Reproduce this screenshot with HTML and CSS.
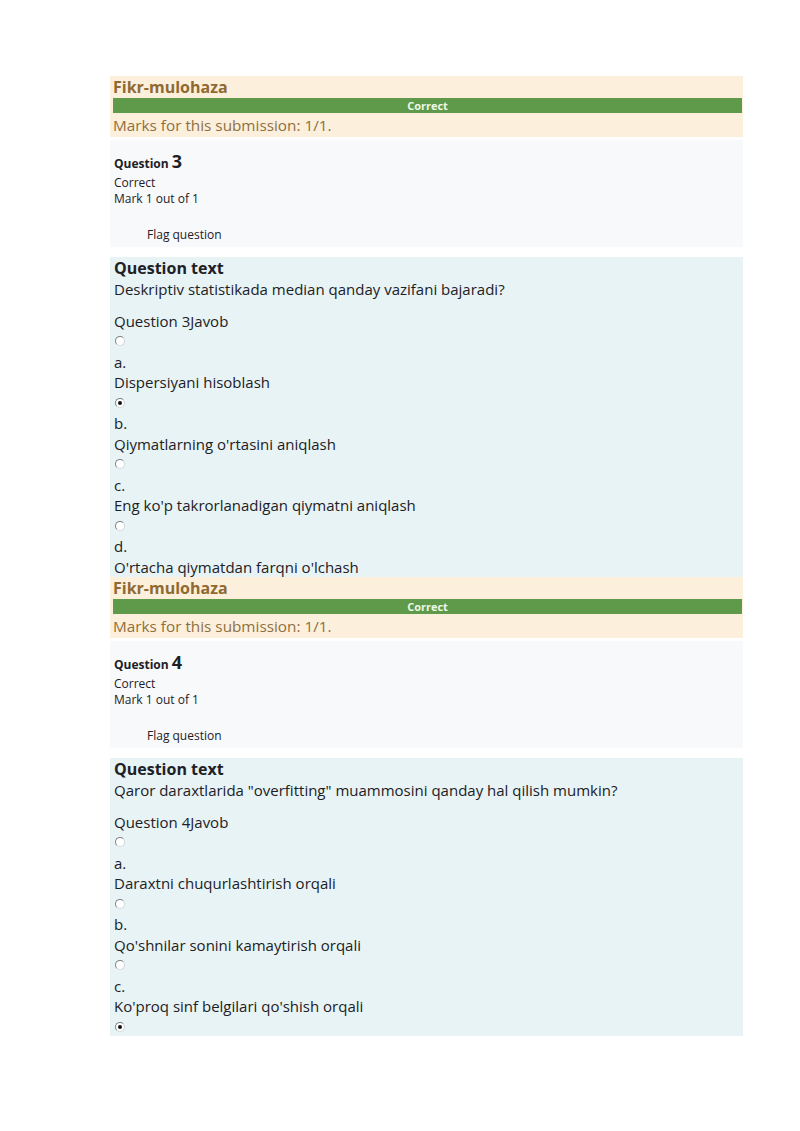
FILE: index.html
```html
<!DOCTYPE html>
<html lang="uz">
<head>
<meta charset="utf-8">
<title>Quiz review</title>
<link rel="stylesheet" href="styles.css">
</head>
<body>
<main class="page">
  <section class="feedback">
    <h4 class="fb-title">Fikr-mulohaza</h4>
    <div class="fb-bar">Correct</div>
    <div class="fb-marks">Marks for this submission: 1/1.</div>
  </section>

  <section class="info">
    <h3 class="qno">Question <span class="num">3</span></h3>
    <div class="state">Correct</div>
    <div class="grade">Mark 1 out of 1</div>
    <div class="flag">Flag question</div>
  </section>

  <section class="content">
    <h4 class="qt-title">Question text</h4>
    <p class="qtext">Deskriptiv statistikada median qanday vazifani bajaradi?</p>
    <div class="prompt">Question 3Javob</div>
    <div class="answer">
      <div class="opt"><span class="radio"></span><span class="letter">a.</span><span class="label">Dispersiyani hisoblash</span></div>
      <div class="opt"><span class="radio checked"></span><span class="letter">b.</span><span class="label">Qiymatlarning o'rtasini aniqlash</span></div>
      <div class="opt"><span class="radio"></span><span class="letter">c.</span><span class="label">Eng ko'p takrorlanadigan qiymatni aniqlash</span></div>
      <div class="opt"><span class="radio"></span><span class="letter">d.</span><span class="label">O'rtacha qiymatdan farqni o'lchash</span></div>
    </div>
  </section>

  <section class="feedback">
    <h4 class="fb-title">Fikr-mulohaza</h4>
    <div class="fb-bar">Correct</div>
    <div class="fb-marks">Marks for this submission: 1/1.</div>
  </section>

  <section class="info">
    <h3 class="qno">Question <span class="num">4</span></h3>
    <div class="state">Correct</div>
    <div class="grade">Mark 1 out of 1</div>
    <div class="flag">Flag question</div>
  </section>

  <section class="content last">
    <h4 class="qt-title">Question text</h4>
    <p class="qtext">Qaror daraxtlarida "overfitting" muammosini qanday hal qilish mumkin?</p>
    <div class="prompt">Question 4Javob</div>
    <div class="answer">
      <div class="opt"><span class="radio"></span><span class="letter">a.</span><span class="label">Daraxtni chuqurlashtirish orqali</span></div>
      <div class="opt"><span class="radio"></span><span class="letter">b.</span><span class="label">Qo'shnilar sonini kamaytirish orqali</span></div>
      <div class="opt"><span class="radio"></span><span class="letter">c.</span><span class="label">Ko'proq sinf belgilari qo'shish orqali</span></div>
      <div class="opt"><span class="radio checked"></span></div>
    </div>
  </section>
</main>
</body>
</html>
```

FILE: styles.css
```css
html, body {
  margin: 0;
  padding: 0;
  background: #ffffff;
}
body {
  font-family: "Open Sans", "Noto Sans", sans-serif;
  color: #1d2125;
}
.page {
  width: 633px;
  margin-left: 110px;
  padding-top: 76px;
  display: flex;
  flex-direction: column;
}
.feedback {
  background: #fcefdc;
  padding: 0 1px 0 3px;
}
.fb-title {
  margin: 0;
  font-size: 16px;
  font-weight: 700;
  line-height: 22px;
  color: #8e6a32;
}
.fb-bar {
  background: #5e9a4a;
  color: #eef7e6;
  font-size: 11px;
  font-weight: 700;
  text-align: center;
  line-height: 15px;
  height: 15px;
}
.fb-marks {
  font-size: 15.3px;
  line-height: 24px;
  color: #8e6f40;
}
.info {
  margin-top: 3px;
  background: #f8f9fb;
  padding: 11px 4px 4px;
  font-size: 12px;
  line-height: 16px;
}
.qno {
  margin: 0 0 1px;
  font-size: 12px;
  font-weight: 700;
  line-height: 20px;
}
.qno .num {
  font-size: 18px;
}
.flag {
  margin-top: 20px;
  padding-left: 33px;
}
.content {
  margin-top: 10px;
  background: #e7f3f5;
  padding: 0 4px 0;
  font-size: 15px;
  line-height: 20.5px;
}
.content.last {
  padding-bottom: 4px;
}
.content.last .opt:last-child .radio {
  margin-bottom: 0;
}
.qt-title {
  margin: 0;
  font-size: 16px;
  font-weight: 700;
  line-height: 22px;
}
.qtext {
  margin: 0 0 11px;
}
.answer {
  display: flex;
  flex-direction: column;
}
.opt {
  display: flex;
  flex-direction: column;
}
.radio {
  display: block;
  width: 10px;
  height: 10px;
  margin: 5px 0 5.5px 1px;
  border-radius: 50%;
  border: 1px solid #d3d6d9;
  border-top-color: #7b8084;
  border-left-color: #7b8084;
  background: #ffffff;
  box-sizing: border-box;
  position: relative;
}
.radio.checked::after {
  content: "";
  position: absolute;
  left: 2px;
  top: 2px;
  width: 4px;
  height: 4px;
  border-radius: 50%;
  background: #111;
}
```
